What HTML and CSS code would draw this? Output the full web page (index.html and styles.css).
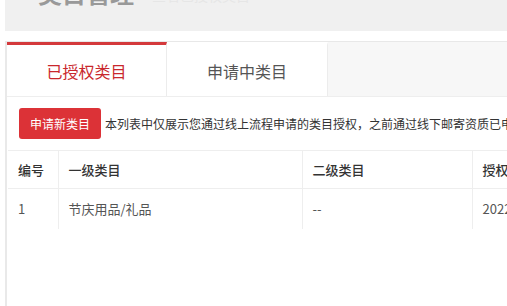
FILE: index.html
```html
<!DOCTYPE html>
<html lang="zh-CN">
<head>
  <meta charset="UTF-8">
  <title>类目管理</title>
  <link rel="stylesheet" href="styles.css">
</head>
<body>
  <div class="page">
    <div class="header">
      <h1>类目管理</h1>
      <span class="sub">查看已授权类目</span>
    </div>

    <div class="panel">
      <div class="tabs">
        <div class="tab active">已授权类目</div>
        <div class="tab">申请中类目</div>
      </div>

      <div class="toolbar">
        <button class="btn-apply">申请新类目</button>
        <span class="notice">本列表中仅展示您通过线上流程申请的类目授权，之前通过线下邮寄资质已申请的类目请联系客服查看</span>
      </div>

      <table class="grid">
        <colgroup>
          <col style="width:50px">
          <col style="width:244px">
          <col style="width:170px">
          <col style="width:200px">
        </colgroup>
        <thead>
          <tr>
            <th>编号</th>
            <th>一级类目</th>
            <th>二级类目</th>
            <th>授权时间</th>
          </tr>
        </thead>
        <tbody>
          <tr>
            <td>1</td>
            <td>节庆用品/礼品</td>
            <td>--</td>
            <td>2022-03-15</td>
          </tr>
        </tbody>
      </table>
    </div>
  </div>
</body>
</html>
```

FILE: styles.css
```css
* {
  margin: 0;
  padding: 0;
  box-sizing: border-box;
}

body {
  width: 507px;
  height: 306px;
  overflow: hidden;
  background: #fff;
  font-family: "Noto Sans CJK SC", "Microsoft YaHei", sans-serif;
  color: #333;
}

.page {
  margin-left: 5px;
}

.header {
  height: 31px;
  background: #f0f0f0;
  display: flex;
  align-items: flex-start;
  overflow: hidden;
  padding-left: 33px;
}

.header h1 {
  font-size: 24px;
  line-height: 24px;
  font-weight: 700;
  color: #999;
  margin-top: -19px;
}

.header .sub {
  font-size: 14px;
  line-height: 14px;
  color: #e6e6e6;
  margin-top: -12px;
  margin-left: 18px;
}

.panel {
  margin-top: 10px;
  border-left: 2px solid #e9e9e9;
  height: 270px;
  overflow: hidden;
}

.tabs {
  display: flex;
  height: 56px;
  background: #f7f7f7;
  border-top: 1px solid #e8e8e8;
  border-bottom: 1px solid #eeeeee;
}

.tab {
  width: 161px;
  display: flex;
  align-items: center;
  justify-content: center;
  background: #fff;
  font-size: 16px;
  color: #555;
  border-top: 3px solid transparent;
  border-right: 1px solid #ececec;
}

.tab.active {
  width: 160px;
  color: #c9282d;
  border-top-color: #d4393c;
}

.toolbar {
  display: flex;
  align-items: center;
  gap: 4px;
  padding: 11px 0 11px 12px;
  white-space: nowrap;
}

.btn-apply {
  flex: none;
  height: 31px;
  padding: 0 11px;
  border: none;
  border-radius: 3px;
  background: #dc3237;
  color: #fff;
  font-family: inherit;
  font-size: 12px;
}

.notice {
  font-size: 12px;
  color: #333;
}

.grid {
  table-layout: fixed;
  width: 664px;
  border-collapse: collapse;
  margin-left: 1px;
  font-size: 13px;
}

.grid th,
.grid td {
  text-align: left;
  padding: 0 10px;
  border-top: 1px solid #eeeeee;
  border-bottom: 1px solid #eeeeee;
  border-left: 1px solid #eeeeee;
  white-space: nowrap;
  overflow: hidden;
}

.grid th:first-child,
.grid td:first-child {
  border-left: none;
}

.grid th {
  height: 38px;
  font-weight: 500;
  color: #333;
}

.grid td {
  height: 40px;
  color: #555;
  border-bottom: none;
}
```
